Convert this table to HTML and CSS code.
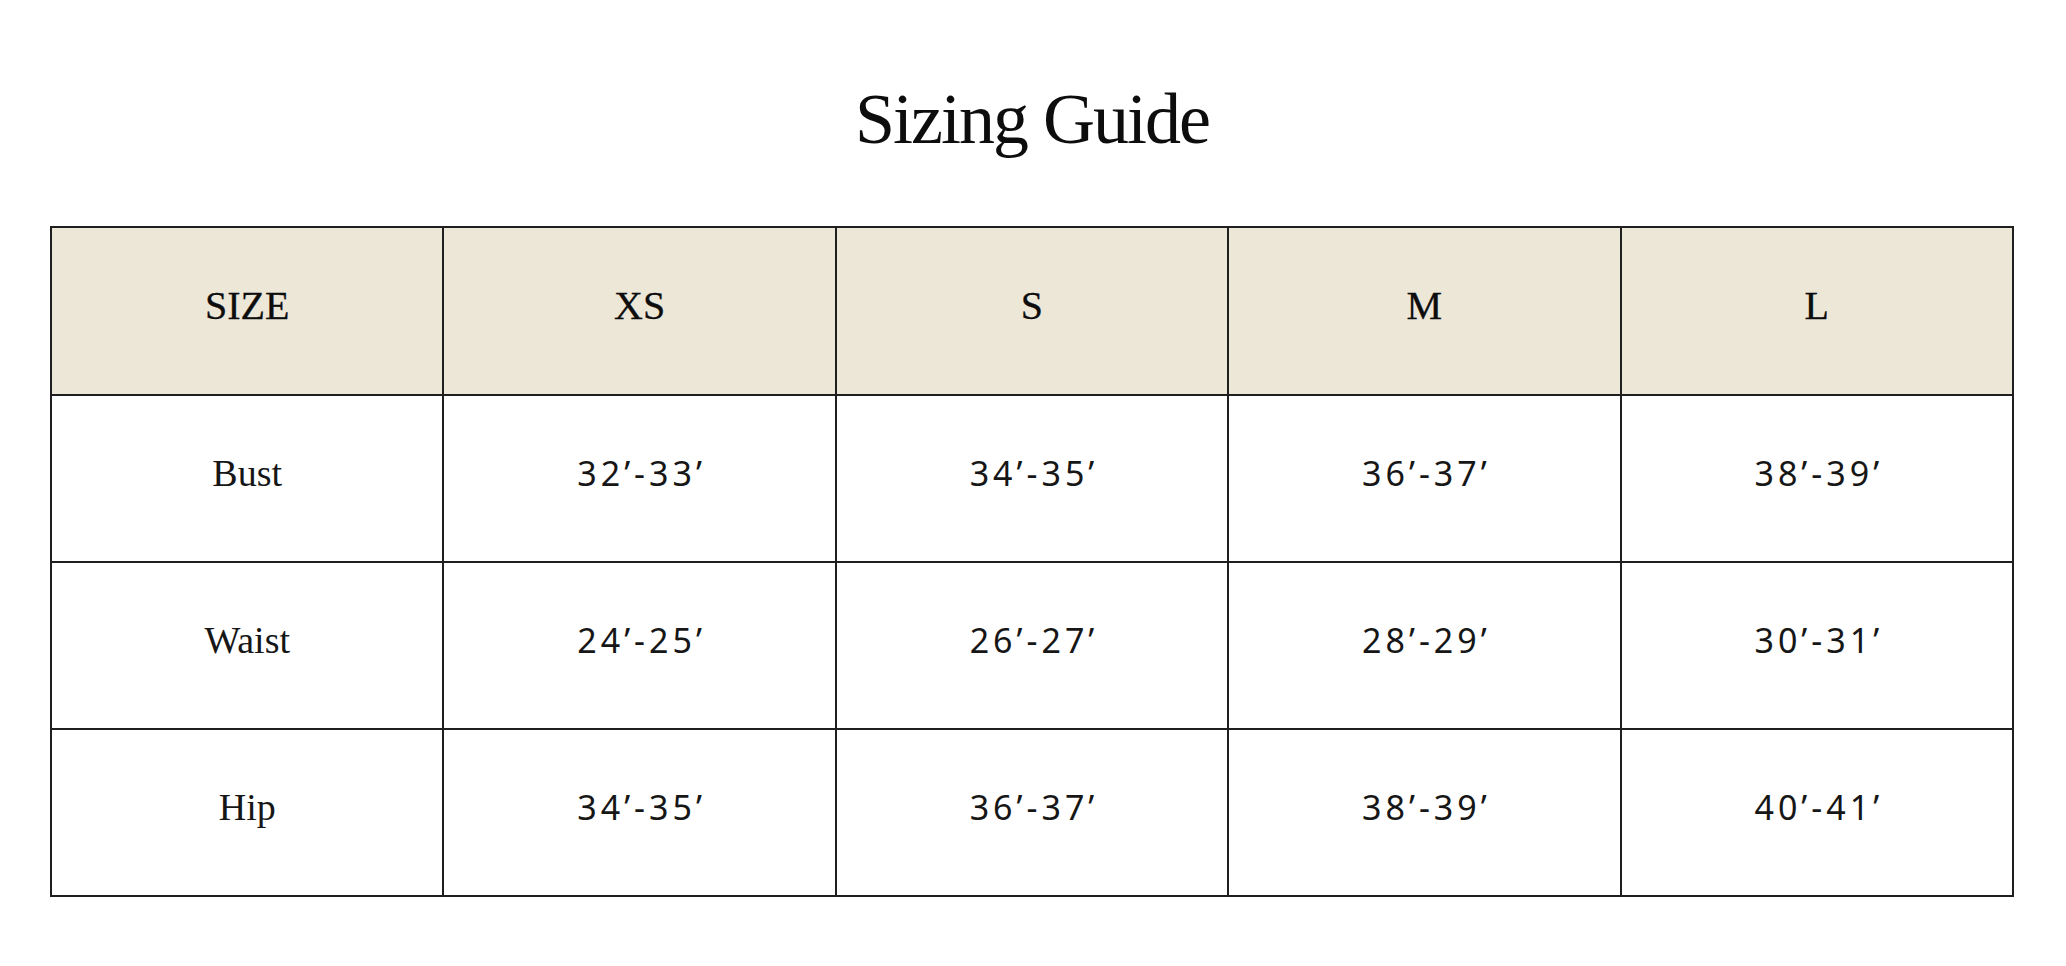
FILE: index.html
```html
<!DOCTYPE html>
<html lang="en">
<head>
<meta charset="utf-8">
<title>Sizing Guide</title>
<link rel="stylesheet" href="styles.css">
</head>
<body>
<main class="page">
  <h1 class="title">Sizing Guide</h1>
  <table class="size-table">
    <thead>
      <tr>
        <th>SIZE</th>
        <th>XS</th>
        <th>S</th>
        <th>M</th>
        <th>L</th>
      </tr>
    </thead>
    <tbody>
      <tr>
        <td class="label">Bust</td>
        <td>32’-33’</td>
        <td>34’-35’</td>
        <td>36’-37’</td>
        <td>38’-39’</td>
      </tr>
      <tr>
        <td class="label">Waist</td>
        <td>24’-25’</td>
        <td>26’-27’</td>
        <td>28’-29’</td>
        <td>30’-31’</td>
      </tr>
      <tr>
        <td class="label">Hip</td>
        <td>34’-35’</td>
        <td>36’-37’</td>
        <td>38’-39’</td>
        <td>40’-41’</td>
      </tr>
    </tbody>
  </table>
</main>
</body>
</html>
```
FILE: styles.css
```css
html, body {
  margin: 0;
  padding: 0;
  background: #ffffff;
}

.page {
  padding: 0 52px 0 50px;
  color: #111111;
}

.title {
  margin: 0;
  padding-top: 83px;
  height: 72px;
  line-height: 72px;
  text-align: center;
  font-family: "Liberation Serif", "DejaVu Serif", serif;
  font-weight: 400;
  font-size: 72px;
  letter-spacing: -2px;
  color: #0d0d0d;
}

.size-table {
  margin-top: 71px;
  width: 1964px;
  border-collapse: collapse;
  table-layout: fixed;
}

.size-table th,
.size-table td {
  border: 2px solid #1f1f1f;
  text-align: center;
  vertical-align: middle;
  padding: 0 0 11px 0;
}

.size-table thead tr {
  height: 168px;
}

.size-table tbody tr {
  height: 167px;
}

.size-table th {
  background: #ede7d8;
  font-family: "Liberation Serif", "DejaVu Serif", serif;
  font-weight: 400;
  font-size: 40px;
  color: #0d0d0d;
  -webkit-text-stroke: 0.3px #0d0d0d;
}

.size-table td {
  font-family: "Noto Sans", "Open Sans", sans-serif;
  font-weight: 400;
  font-size: 34px;
  letter-spacing: 4px;
  text-indent: 4px;
  color: #161616;
}

.size-table td.label {
  font-family: "Liberation Serif", "DejaVu Serif", serif;
  font-weight: 400;
  font-size: 38px;
  letter-spacing: 0;
  text-indent: 0;
}
```
